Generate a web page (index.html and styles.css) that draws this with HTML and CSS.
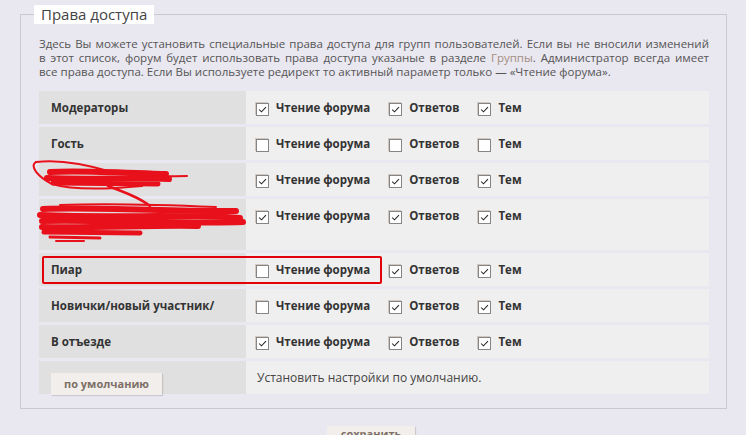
FILE: index.html
```html
<!DOCTYPE html>
<html lang="ru">
<head>
<meta charset="utf-8">
<title>Права доступа</title>
<link rel="stylesheet" href="styles.css">
</head>
<body>
<div class="page">
  <fieldset class="perms">
    <legend class="perms-title">Права доступа</legend>
    <div class="desc">
      <span class="line jl">Здесь Вы можете установить специальные права доступа для групп пользователей. Если вы не вносили изменений</span>
      <span class="line jl">в этот список, форум будет использовать права доступа указаные в разделе <a class="link">Группы</a>. Администратор всегда имеет</span>
      <span class="line">все права доступа. Если Вы используете редирект то активный параметр только — «Чтение форума».</span>
    </div>
    <div class="grid">
      <div class="row">
        <div class="label">Модераторы</div>
        <div class="opts">
          <span class="opt"><span class="cb"><svg viewBox="0 0 12 12"><polyline points="2.3,6 4.9,8.6 9.8,3.4"/></svg></span>Чтение форума</span>
          <span class="opt"><span class="cb"><svg viewBox="0 0 12 12"><polyline points="2.3,6 4.9,8.6 9.8,3.4"/></svg></span>Ответов</span>
          <span class="opt"><span class="cb"><svg viewBox="0 0 12 12"><polyline points="2.3,6 4.9,8.6 9.8,3.4"/></svg></span>Тем</span>
        </div>
      </div>
      <div class="row">
        <div class="label">Гость</div>
        <div class="opts">
          <span class="opt"><span class="cb"></span>Чтение форума</span>
          <span class="opt"><span class="cb"></span>Ответов</span>
          <span class="opt"><span class="cb"></span>Тем</span>
        </div>
      </div>
      <div class="row">
        <div class="label"><div class="redacted-1"></div></div>
        <div class="opts">
          <span class="opt"><span class="cb"><svg viewBox="0 0 12 12"><polyline points="2.3,6 4.9,8.6 9.8,3.4"/></svg></span>Чтение форума</span>
          <span class="opt"><span class="cb"><svg viewBox="0 0 12 12"><polyline points="2.3,6 4.9,8.6 9.8,3.4"/></svg></span>Ответов</span>
          <span class="opt"><span class="cb"><svg viewBox="0 0 12 12"><polyline points="2.3,6 4.9,8.6 9.8,3.4"/></svg></span>Тем</span>
        </div>
      </div>
      <div class="row">
        <div class="label"><div class="redacted-2"></div></div>
        <div class="opts">
          <span class="opt"><span class="cb"><svg viewBox="0 0 12 12"><polyline points="2.3,6 4.9,8.6 9.8,3.4"/></svg></span>Чтение форума</span>
          <span class="opt"><span class="cb"><svg viewBox="0 0 12 12"><polyline points="2.3,6 4.9,8.6 9.8,3.4"/></svg></span>Ответов</span>
          <span class="opt"><span class="cb"><svg viewBox="0 0 12 12"><polyline points="2.3,6 4.9,8.6 9.8,3.4"/></svg></span>Тем</span>
        </div>
      </div>
      <div class="row">
        <div class="label">Пиар</div>
        <div class="opts">
          <span class="opt"><span class="cb"></span>Чтение форума</span>
          <span class="opt"><span class="cb"><svg viewBox="0 0 12 12"><polyline points="2.3,6 4.9,8.6 9.8,3.4"/></svg></span>Ответов</span>
          <span class="opt"><span class="cb"><svg viewBox="0 0 12 12"><polyline points="2.3,6 4.9,8.6 9.8,3.4"/></svg></span>Тем</span>
        </div>
      </div>
      <div class="row">
        <div class="label">Новички/новый участник/</div>
        <div class="opts">
          <span class="opt"><span class="cb"></span>Чтение форума</span>
          <span class="opt"><span class="cb"><svg viewBox="0 0 12 12"><polyline points="2.3,6 4.9,8.6 9.8,3.4"/></svg></span>Ответов</span>
          <span class="opt"><span class="cb"><svg viewBox="0 0 12 12"><polyline points="2.3,6 4.9,8.6 9.8,3.4"/></svg></span>Тем</span>
        </div>
      </div>
      <div class="row">
        <div class="label">В отъезде</div>
        <div class="opts">
          <span class="opt"><span class="cb"><svg viewBox="0 0 12 12"><polyline points="2.3,6 4.9,8.6 9.8,3.4"/></svg></span>Чтение форума</span>
          <span class="opt"><span class="cb"><svg viewBox="0 0 12 12"><polyline points="2.3,6 4.9,8.6 9.8,3.4"/></svg></span>Ответов</span>
          <span class="opt"><span class="cb"><svg viewBox="0 0 12 12"><polyline points="2.3,6 4.9,8.6 9.8,3.4"/></svg></span>Тем</span>
        </div>
      </div>
      <div class="row">
        <div class="label label-btn"><button class="btn btn-default" type="button">по умолчанию</button></div>
        <div class="opts opts-note">Установить настройки по умолчанию.</div>
      </div>

      <svg class="scribble" viewBox="30 158 220 115">
        <g fill="none" stroke="#e8111b" stroke-linecap="round" stroke-linejoin="round">
          <path stroke-width="2" d="M36,162 C60,159 92,166 112,172 C140,178 168,176 187,176"/>
          <path stroke-width="2" d="M36,162 C29,166 38,177 52,184 C72,190 110,189 142,186"/>
          <path stroke-width="6" d="M50,172 C80,170 130,173 166,174"/>
          <path stroke-width="6" d="M47,178 C90,180 130,177 169,179"/>
          <path stroke-width="5" d="M53,183 L158,184"/>
          <path stroke-width="2.5" d="M108,186 C124,192 140,198 150,206"/>
          <path stroke-width="2" d="M60,205 C110,203 170,205 216,207"/>
          <path stroke-width="6" d="M43,209 C100,207 180,212 236,211"/>
          <path stroke-width="6" d="M40,215 C110,218 190,214 240,218"/>
          <path stroke-width="6" d="M42,221 C120,220 190,224 243,222"/>
          <path stroke-width="6" d="M42,227 C100,228 150,225 198,226"/>
          <path stroke-width="5" d="M44,232 L140,233"/>
          <path stroke-width="3" d="M50,237 L100,238"/>
          <path stroke-width="2" d="M56,241 L84,241"/>
        </g>
      </svg>
      <div class="highlight"></div>
    </div>
  </fieldset>
  <div class="actions">
    <button class="btn btn-save" type="button">сохранить</button>
  </div>
</div>
</body>
</html>
```

FILE: styles.css
```css
* {
  box-sizing: border-box;
}

html, body {
  margin: 0;
  height: 100%;
  overflow: hidden;
}

body {
  background: #e9e7f0;
  font-family: "Open Sans", "DejaVu Sans", sans-serif;
  color: #333;
}

.page {
  padding: 5px 19px 0 20px;
}

.perms {
  margin: 0;
  min-width: 0;
  border: 1px solid #c9c8cc;
  padding: 13px 17px 14px 18px;
}

.perms-title {
  margin-left: -5px;
  padding: 0 7px;
  background: #fff;
  font-size: 15px;
  line-height: 19px;
  color: #444;
}

.desc {
  font-size: 11.5px;
  line-height: 14px;
  color: #555;
  margin-bottom: 12px;
}

.line {
  display: block;
}

.jl {
  text-align: justify;
  text-align-last: justify;
}

.link {
  color: #a48f80;
}

.grid {
  position: relative;
  display: flex;
  flex-direction: column;
  gap: 3px;
}

.row {
  display: grid;
  grid-template-columns: 207px 1fr;
}

.label {
  background: #e0e0e0;
  padding: 7px 12px;
  font-weight: 700;
  font-size: 11.5px;
  line-height: 19px;
  color: #333;
}

.redacted-1 {
  height: 19px;
}

.redacted-2 {
  height: 37px;
}

.opts {
  background: #efefef;
  padding: 7px 10px;
  display: flex;
  align-items: flex-start;
  font-size: 11.5px;
  line-height: 19px;
  font-weight: 700;
  color: #333;
}

.opt {
  display: flex;
  align-items: flex-start;
  gap: 7px;
  margin-right: 19px;
}

.cb {
  margin-top: 5px;
  width: 13px;
  height: 13px;
  border: 1px solid #858585;
  background: #fff;
  box-shadow: -1px -1px 0 #d0c8c0;
  display: block;
}

.cb svg {
  display: block;
  width: 11px;
  height: 11px;
}

.cb polyline {
  fill: none;
  stroke: #222;
  stroke-width: 1.1;
}

.opts-note {
  font-weight: 400;
  font-size: 12px;
  color: #444;
  padding-left: 11px;
}

.label-btn {
  padding: 12px 12px 0;
}

.btn {
  font-family: "Open Sans", "DejaVu Sans", sans-serif;
  font-weight: 700;
  font-size: 11px;
  line-height: 22px;
  height: 22px;
  padding: 0 13px;
  border: 0;
  border-radius: 0;
  background: #f1eeeb;
  color: #7d6f66;
  box-shadow: 1px 1px 1px rgba(0, 0, 0, 0.13);
}

.btn-default {
  display: block;
  margin-bottom: -3px;
}

.btn-save {
  padding: 0 14px;
  height: 16px;
  line-height: 16px;
}

.scribble {
  position: absolute;
  left: -9px;
  top: 67px;
  width: 220px;
  height: 115px;
  pointer-events: none;
}

.highlight {
  position: absolute;
  left: 3px;
  top: 165px;
  width: 340px;
  height: 28px;
  border: 2px solid #e3000b;
  border-radius: 2px;
  pointer-events: none;
}

.actions {
  display: flex;
  justify-content: center;
  padding: 17px 5px 0 0;
}
```
